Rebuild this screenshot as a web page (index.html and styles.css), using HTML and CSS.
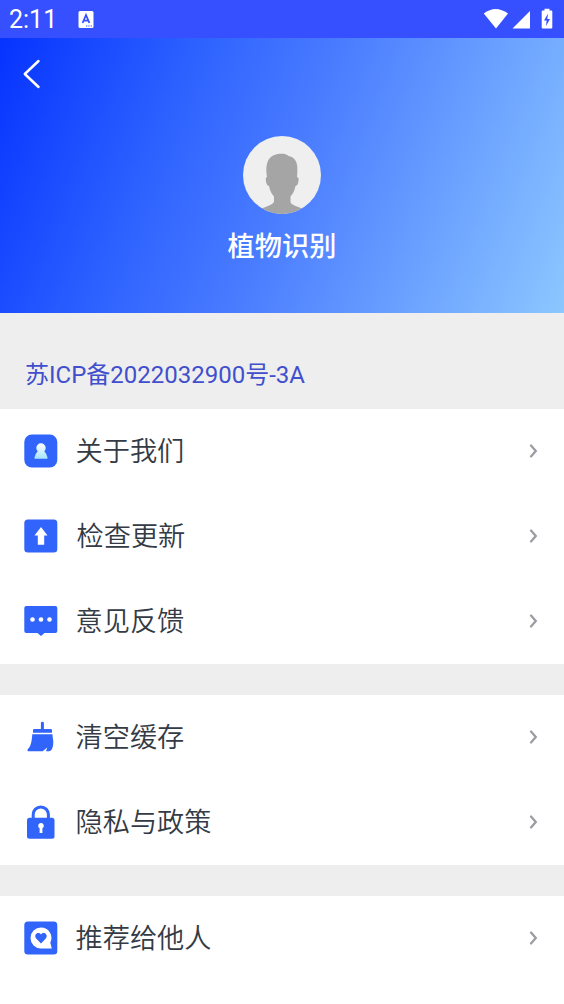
FILE: index.html
```html
<!DOCTYPE html>
<html lang="zh-CN">
<head>
<meta charset="utf-8">
<title>植物识别</title>
<link rel="stylesheet" href="styles.css">
</head>
<body>
<div class="status">
  <span class="time">2:11</span>
  <svg class="ime" width="16" height="17" viewBox="0 0 16 17"><rect x=".5" width="15" height="17" rx="1.5" fill="#fff"/><path d="M4.600 12 8 4l3.400 8M5.800 9.600h4.400" fill="none" stroke="#364fff" stroke-width="1.8"/><path d="M8 15h1.300M10.300 15h1.300M12.600 15h1.300" stroke="#364fff" stroke-width="1.2"/></svg>
  <svg class="signals" width="72" height="22" viewBox="0 0 72 22"><g fill="#fff"><path d="M.8 5.500Q12.500-3.500 25 5.500L13 20.500Z"/><path d="M47 3v17.500H29.500Z"/><path d="M61.500 2.500V.8h5v1.700h1.800q1 0 1 1v16q0 1-1 1h-8.600q-1 0-1-1v-16q0-1 1-1Z"/></g><path d="M65 5.500 61 12.500h2.600l-.6 5.500 4-7h-2.700Z" fill="#364fff"/></svg>
</div>
<header class="hero">
  <svg class="back" width="20" height="32" viewBox="0 0 20 32"><path d="M16.500 3 2.800 16l13.700 13" fill="none" stroke="#fff" stroke-width="2.500" stroke-linecap="round" stroke-linejoin="round"/></svg>
  <div class="profile">
    <svg class="avatar" width="78" height="78" viewBox="0 0 78 78"><defs><clipPath id="disc"><circle cx="39" cy="39" r="39"/></clipPath></defs><g clip-path="url(#disc)"><path fill="#efefef" d="M0 0h78v78H0Z"/><path fill="#a5a5a5" d="M24 41c-1-5-.8-10 0-13 1-6 6-10 13-10.300 4-.2 6.500.2 8.500 2.300 5.500 1 8.300 5 8.700 10 .3 4 .2 8-.2 11 1.700.2 1.900 2 1.400 4.500-.4 2.700-1.300 4.200-2.900 4.500-1 5-2.700 8-5 10.500V66c0 3 8.500 5 14.500 7.500V82H16v-8.500c7-3 15-5 15-8v-5c-2.300-2.500-4-5.500-5-10.500-1.700-.3-2.600-2-3-4.500-.4-2.600-.4-4.200 1-4.500Z"/></g></svg>
    <h1 class="name">植物识别</h1>
  </div>
</header>
<p class="record">苏ICP备2022032900号-3A</p>
<main class="groups">
  <section class="group">
    <div class="row">
      <svg class="icon" viewBox="0 0 34 34"><defs><linearGradient id="pawn" x2="0" y2="1"><stop stop-color="#fff"/><stop offset="1" stop-color="#a6e4ff"/></linearGradient></defs><rect x=".3" y=".5" width="33" height="33" rx="7.500" fill="#3164fa"/><path fill="url(#pawn)" d="M13.700 17.300a4.700 4.700 0 1 1 6.600 0q2.200 2.200 3.300 6.500.1.900-.8.900H11.200q-.9 0-.8-.9 1.100-4.300 3.300-6.500Z"/></svg>
      <span class="label">关于我们</span><svg class="arrow" viewBox="0 0 10 16"><path d="m2 2.500 4.800 5.500L2 13.500"/></svg>
    </div>
    <div class="row">
      <svg class="icon" viewBox="0 0 34 34"><rect x=".3" y=".5" width="33" height="33" rx="3.500" fill="#3164fa"/><path fill="#fff" d="m17 8 6.500 8.500h-3.300v9.300h-6.400v-9.300h-3.300Z"/></svg>
      <span class="label shifted">检查更新</span><svg class="arrow" viewBox="0 0 10 16"><path d="m2 2.500 4.800 5.500L2 13.500"/></svg>
    </div>
    <div class="row">
      <svg class="icon" viewBox="0 0 34 34"><path fill="#3164fa" d="M2.300 2h29q2 0 2 2v23q0 2-2 2H20.500L17 32l-3.500-3H2.300q-2 0-2-2V4q0-2 2-2Z"/><g fill="#fff"><circle cx="8.500" cy="15.500" r="2.300"/><circle cx="17" cy="15.500" r="2.300"/><circle cx="25.500" cy="15.500" r="2.300"/></g></svg>
      <span class="label">意见反馈</span><svg class="arrow" viewBox="0 0 10 16"><path d="m2 2.500 4.800 5.500L2 13.500"/></svg>
    </div>
  </section>
  <section class="group">
    <div class="row">
      <svg class="icon" viewBox="0 0 34 34"><path fill="#3164fa" d="M16.900 3q0-1.200 1.500-1.200T19.900 3v6h6.800Q28 9 28 10.300v2.500H9v-2.500Q9 9 10.300 9h6.600ZM8.300 14.200h20.200c-.2 3 1.300 6 .7 10-.5 4-1.700 7-4.200 7h-3l1.200-3.800-4.500 3.800H5q-2.300 0-1.300-2C7 26.500 7.800 21 8.300 14.200Z"/></svg>
      <span class="label">清空缓存</span><svg class="arrow" viewBox="0 0 10 16"><path d="m2 2.500 4.800 5.500L2 13.500"/></svg>
    </div>
    <div class="row">
      <svg class="icon" viewBox="0 0 34 34"><path d="M9.200 14v-4.500a7.600 7.600 0 0 1 15.200 0V14" fill="none" stroke="#3164fa" stroke-width="3"/><rect x="3" y="12.700" width="27.500" height="21" rx="2.500" fill="#3164fa"/><path d="M15.600 23.300a2.800 2.800 0 1 1 2.800 0V28h-2.800Z" fill="#fff"/></svg>
      <span class="label">隐私与政策</span><svg class="arrow" viewBox="0 0 10 16"><path d="m2 2.500 4.800 5.500L2 13.500"/></svg>
    </div>
  </section>
  <section class="group last">
    <div class="row">
      <svg class="icon" viewBox="0 0 34 34"><rect x=".3" y=".5" width="33" height="33" rx="3.500" fill="#3164fa"/><path fill="#fff" d="M17 6.500a10.500 10.500 0 0 1 9.300 15.300l1.500 5.700H17a10.500 10.500 0 0 1 0-21Z"/><path fill="#3164fa" d="m17 22.500-4.800-5c-3-4 2-7.500 4.800-4 2.800-3.500 7.800 0 4.800 4Z"/></svg>
      <span class="label">推荐给他人</span><svg class="arrow" viewBox="0 0 10 16"><path d="m2 2.500 4.800 5.500L2 13.500"/></svg>
    </div>
  </section>
</main>
</body>
</html>
```
FILE: styles.css
```css
* { box-sizing: border-box; }
body {
  margin: 0;
  height: 1004px;
  overflow: hidden;
  display: flex;
  flex-direction: column;
  background: #eee;
  font-family: Roboto, "Noto Sans CJK SC", sans-serif;
}
.status {
  height: 38px;
  flex: none;
  display: flex;
  align-items: center;
  padding: 0 9px;
  background: #364fff;
  color: #fff;
}
.time { width: 69px; font-size: 25px; line-height: 36px; padding-top: 2px; }
.signals { margin-left: auto; }
.hero {
  height: 275px;
  flex: none;
  padding-top: 20px;
  background: linear-gradient(112deg, #0633ff 0%, #2e62ff 30%, #4b7dff 52%, #8cc7ff 100%);
}
.back { display: block; margin-left: 22px; }
.profile {
  display: flex;
  flex-direction: column;
  align-items: center;
  padding-top: 46px;
}
.name {
  margin: 13px 0 0;
  color: #fff;
  font-size: 27.2px;
  line-height: 40px;
  font-weight: 500;
}
.record {
  height: 96px;
  flex: none;
  margin: 0;
  padding: 27px 25px 0;
  color: #414fcd;
  font-size: 24px;
  line-height: 70px;
  font-weight: 400;
}
.groups { flex: 1; display: flex; flex-direction: column; gap: 31px; }
.group { background: #fff; }
.last { flex: 1; }
.row {
  height: 85px;
  display: flex;
  align-items: center;
  padding: 0 25px 1px 24px;
}
.icon { width: 34px; height: 34px; flex: none; }
.label {
  flex: 1;
  margin-left: 17.5px;
  padding-top: 1px;
  color: #343b45;
  font-size: 27.2px;
  line-height: 40px;
  font-weight: 350;
}
.shifted { padding-left: 1px; }
.arrow {
  width: 10px;
  height: 16px;
  fill: none;
  stroke: #9b9da3;
  stroke-width: 2.3;
  stroke-linecap: round;
}
```
